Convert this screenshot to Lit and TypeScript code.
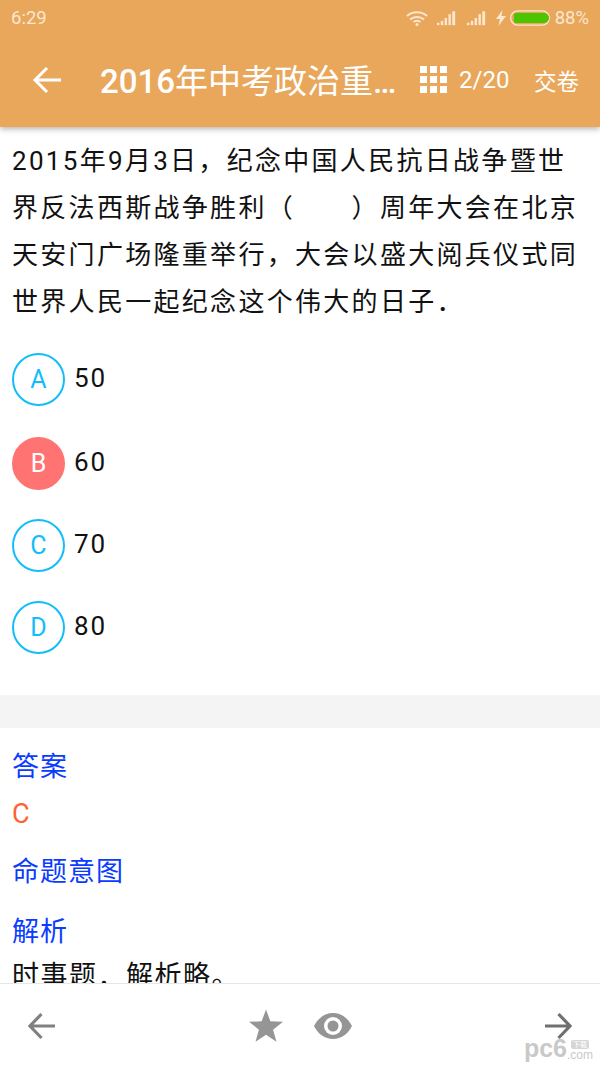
import { css, html, LitElement, nothing, svg } from "lit";
import { customElement } from "lit/decorators.js";

interface Choice {
  key: string;
  text: string;
  picked?: boolean;
}

const CHOICES: Choice[] = [
  { key: "A", text: "50" },
  { key: "B", text: "60", picked: true },
  { key: "C", text: "70" },
  { key: "D", text: "80" },
];

@customElement("app-root")
export class AppRoot extends LitElement {
  static override styles = css`
    :host {
      display: block;
      width: 600px;
      height: 1067px;
      font-family: Roboto, "Noto Sans CJK SC", sans-serif;
      background: #fff;
      color: #111;
      position: relative;
      overflow: hidden;
    }

    .page {
      display: flex;
      flex-direction: column;
      height: 1067px;
    }

    .top {
      height: 127px;
      flex: none;
      background: #e9a75b;
      box-shadow: 0 2px 6px rgba(0, 0, 0, 0.3);
      position: relative;
      z-index: 1;
      color: #fff;
    }

    .status {
      height: 36px;
      display: flex;
      align-items: center;
      padding: 0 11px;
      color: #fbe6cf;
      font-size: 18.5px;
    }

    .status .time {
      flex: 1;
    }

    .status svg {
      display: block;
    }

    .wifi {
      margin-right: 9px;
    }

    .signal {
      margin-right: 9px;
    }

    .bolt {
      margin: 0 4px 0 -1px;
    }

    .percent {
      margin-left: 5px;
      font-size: 18.5px;
    }

    .bar {
      height: 91px;
      display: flex;
      align-items: center;
      padding-bottom: 3px;
      box-sizing: border-box;
    }

    .back {
      margin-left: 32px;
      width: 30px;
      flex: none;
    }

    .title {
      margin-left: 38px;
      width: 298px;
      flex: none;
      font-size: 33px;
      font-weight: 500;
      line-height: 44px;
      margin-top: 4px;
      white-space: nowrap;
      overflow: hidden;
      text-overflow: ellipsis;
    }

    .title span {
      font-weight: 400;
    }

    .grid {
      margin-left: 22px;
      margin-top: -2px;
      flex: none;
    }

    .count {
      margin-left: 12px;
      font-size: 24px;
      width: 48px;
      flex: none;
    }

    .submit {
      margin-left: 27px;
      font-size: 22.5px;
      flex: none;
      white-space: nowrap;
    }

    .content {
      flex: 1;
      min-height: 0;
      overflow: hidden;
    }

    .question {
      margin: 0;
      padding: 11px 10px 0 12px;
      font-size: 26px;
      line-height: 47px;
      letter-spacing: 2.3px;
    }

    .choices {
      margin-top: 27px;
      padding-left: 12px;
      display: flex;
      flex-direction: column;
      gap: 29px;
    }

    .choice {
      display: flex;
      align-items: center;
      gap: 9px;
      height: 53px;
    }

    .choice:first-child {
      margin-bottom: 2px;
    }

    .mark {
      width: 53px;
      height: 53px;
      box-sizing: border-box;
      border-radius: 50%;
      border: 2px solid #12bdfb;
      color: #12bdfb;
      font-size: 25px;
      display: flex;
      align-items: center;
      justify-content: center;
      flex: none;
    }

    .mark.picked {
      background: #ff7373;
      border-color: #ff7373;
      color: #fff;
    }

    .choice-text {
      font-size: 26px;
      letter-spacing: 2px;
      margin-top: -4px;
    }

    .band {
      height: 33px;
      margin-top: 41px;
      background: #f4f4f4;
    }

    .notes {
      padding: 19px 12px 0;
      font-size: 27px;
      line-height: 40px;
    }

    .notes div {
      letter-spacing: 1px;
    }

    .label {
      color: #0a3cff;
    }

    .answer {
      color: #ff6236;
      margin-top: 7px;
    }

    .purpose {
      margin-top: 18px;
    }

    .analysis {
      margin-top: 20px;
    }

    .notes .analysis-text {
      margin-top: 4px;
      letter-spacing: 1.5px;
    }

    .bottom {
      height: 84px;
      flex: none;
      box-sizing: border-box;
      border-top: 1px solid #e6e6e6;
      background: #fff;
      display: flex;
      align-items: center;
      justify-content: space-between;
      padding: 0 28px;
    }

    .bottom svg {
      display: block;
    }

    .middle {
      display: flex;
      align-items: center;
      gap: 31px;
    }

    .watermark {
      position: absolute;
      right: 7px;
      bottom: 6px;
      display: flex;
      align-items: flex-end;
      color: #c9c9c9;
      font-family: "Liberation Sans", "Noto Sans CJK SC", sans-serif;
      line-height: 1;
    }

    .watermark .big {
      font-size: 25px;
      font-weight: 700;
    }

    .watermark .side {
      display: flex;
      flex-direction: column;
      align-items: center;
    }

    .watermark .tag {
      font-size: 7px;
      padding: 1px 2px;
      background: #d6d6d6;
      color: #fff;
      border-radius: 2px;
    }

    .watermark .small {
      font-size: 12px;
    }
  `;

  private renderChoice(choice: Choice) {
    return html`
      <div class="choice">
        <div class="mark ${choice.picked ? "picked" : ""}">${choice.key}</div>
        <div class="choice-text">${choice.text}</div>
      </div>
    `;
  }

  private renderSignal() {
    return html`
      <svg class="signal" width="21" height="16" viewBox="0 0 22 16" fill="currentColor">
        <rect x="0" y="13" width="2.5" height="2.5" />
        <rect x="4" y="11" width="2.5" height="4.5" />
        <rect x="8" y="8" width="2.5" height="7.5" />
        <rect x="12" y="4" width="2.5" height="11.5" />
        <rect x="16" y="1" width="3" height="14.5" />
      </svg>
    `;
  }

  private renderArrow(flip: boolean, color: string, width: number) {
    return html`
      <svg width="28" height="28" viewBox="0 0 28 28" fill="none" stroke=${color} stroke-width=${width} style=${flip ? "transform: scaleX(-1)" : nothing}>
        <path d="M27 14H2.5M13.5 2 2 14l11.5 12" />
      </svg>
    `;
  }

  override render() {
    return html`
      <div class="page">
        <div class="top">
          <div class="status">
            <span class="time">6:29</span>
            <svg class="wifi" width="22" height="16" viewBox="0 0 22 16" fill="none" stroke="currentColor" stroke-width="2">
              <path d="M1 6c5.5-5 14.500-5 20 0M4 9.500c4-3.500 10-3.500 14 0M7.500 12c2-1.500 5-1.500 7 0" />
              <circle cx="11" cy="14.500" r="1.500" fill="currentColor" stroke="none" />
            </svg>
            ${this.renderSignal()} ${this.renderSignal()}
            <svg class="bolt" width="10" height="16" viewBox="0 0 10 16" fill="currentColor">
              <path d="M6.500 0 0 9h4l-1.500 7L10 6H5.500z" />
            </svg>
            <svg width="40" height="16" viewBox="0 0 41 16">
              <rect x="0.700" y="0.700" width="39.600" height="14.600" rx="7.300" fill="none" stroke="#fbe6cf" stroke-width="1.300" />
              <path d="M7 3h28a5 5 0 0 1 0 10H7a5 5 0 0 1-3-1V4a5 5 0 0 1 3-1z" fill="#4cc400" />
            </svg>
            <span class="percent">88%</span>
          </div>
          <div class="bar">
            <svg class="back" width="30" height="28" viewBox="0 0 30 28" fill="none" stroke="#fff" stroke-width="3">
              <path d="M29 14H3M15 2 3 14l12 12" />
            </svg>
            <div class="title">2016<span>年中考政治重点题库</span></div>
            <svg class="grid" width="27" height="27" viewBox="0 0 27 27" fill="#fff">
              ${[0, 10, 20].map((y) => [0, 10, 20].map((x) => svg`<rect x=${x} y=${y} width="7" height="7" />`))}
            </svg>
            <div class="count">2/20</div>
            <div class="submit">交卷</div>
          </div>
        </div>

        <div class="content">
          <p class="question">2015年9月3日，纪念中国人民抗日战争暨世界反法西斯战争胜利（　　）周年大会在北京天安门广场隆重举行，大会以盛大阅兵仪式同世界人民一起纪念这个伟大的日子．</p>
          <div class="choices">${CHOICES.map((c) => this.renderChoice(c))}</div>
          <div class="band"></div>
          <div class="notes">
            <div class="label">答案</div>
            <div class="answer">C</div>
            <div class="label purpose">命题意图</div>
            <div class="label analysis">解析</div>
            <div class="analysis-text">时事题．解析略。</div>
          </div>
        </div>

        <div class="bottom">
          ${this.renderArrow(false, "#808080", 3.2)}
          <div class="middle">
            <svg width="34" height="33" viewBox="0 0 36 34" fill="#959595">
              <path d="M18 0l4.600 12.600 13.400.500-10.500 8.300 3.600 12.900L18 26.800 6.900 34.300l3.600-12.900L0 13.100l13.400-.500z" />
            </svg>
            <svg width="38" height="26" viewBox="0 0 38 26">
              <path d="M0 13C4 5 11 0 19 0s15 5 19 13c-4 8-11 13-19 13S4 21 0 13z" fill="#959595" />
              <circle cx="19" cy="13" r="9" fill="#fff" />
              <circle cx="19" cy="13" r="5.500" fill="#959595" />
            </svg>
          </div>
          ${this.renderArrow(true, "#707070", 3.2)}
        </div>
      </div>
      <div class="watermark">
        <span class="big">pc6</span>
        <div class="side"><span class="tag">下载</span><span class="small">.com</span></div>
      </div>
    `;
  }
}
